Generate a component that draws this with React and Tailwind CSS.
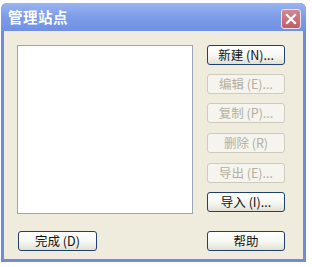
import React from "react";

const font = { fontFamily: '"Noto Sans CJK SC", "DejaVu Sans", sans-serif' };

function Btn({ children, disabled, className = "" }) {
  return (
    <div
      className={
        "w-[78px] h-[20px] rounded-[3px] border flex items-center justify-center text-[12.5px] leading-none whitespace-pre " +
        (disabled
          ? "border-[#cdcbbe] bg-[#f5f4ee] text-[#b3b0a0] "
          : "border-[#1f3f6e] bg-gradient-to-b from-white via-[#f8f8f4] to-[#e2e0d4] text-[#111] ") +
        className
      }
    >
      {children}
    </div>
  );
}

export default function App() {
  return (
    <div className="w-[312px] h-[267px] bg-white pt-[3px] pl-[1px]" style={font}>
      <div className="w-[305px] h-[259px] flex flex-col bg-[#6f8ade] rounded-t-[6px] overflow-hidden">
        <div className="h-[28px] shrink-0 flex items-center justify-between pl-[7px] pr-[5px] bg-gradient-to-b from-[#9ab4f2] via-[#7c9ce9] to-[#7090e2]">
          <span className="text-white font-bold text-[14.5px] leading-none tracking-[0.5px]">管理站点</span>
          <div className="w-[20px] h-[20px] mt-[3px] rounded-[3px] border border-[#f0e6ea] bg-gradient-to-b from-[#d48690] to-[#c25c68] flex items-center justify-center">
            <svg width="12" height="12" viewBox="0 0 12 12">
              <path d="M2 2 L10 10 M10 2 L2 10" stroke="white" strokeWidth="2.2" strokeLinecap="square" />
            </svg>
          </div>
        </div>
        <div className="flex-1 mx-[3px] mb-[3px] bg-[#efecdd] pl-[13px] pt-[14px] flex flex-col">
          <div className="flex">
            <div className="w-[176px] h-[169px] bg-white border border-[#9aa6b8]" />
            <div className="ml-[14px] flex flex-col">
              <Btn>新建 (N)...</Btn>
              <Btn disabled className="mt-[9px]">编辑 (E)...</Btn>
              <Btn disabled className="mt-[9px]">复制 (P)...</Btn>
              <Btn disabled className="mt-[10px]">删除 (R)</Btn>
              <Btn disabled className="mt-[10px]">导出 (E)...</Btn>
              <Btn className="mt-[9px]">导入 (I)...</Btn>
            </div>
          </div>
          <div className="flex mt-[17px]">
            <Btn className="ml-[1px] w-[79px]">完成 (D)</Btn>
            <Btn className="ml-[110px]">帮助</Btn>
          </div>
        </div>
      </div>
    </div>
  );
}
